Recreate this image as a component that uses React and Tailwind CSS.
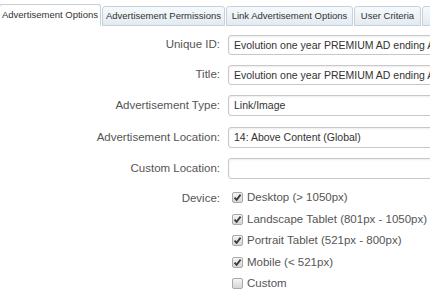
import { useState } from "react";

const tabs = [
  { label: "Advertisement Options", w: "w-[102px]", active: true },
  { label: "Advertisement Permissions", w: "w-[123px]" },
  { label: "Link Advertisement Options", w: "w-[127px]" },
  { label: "User Criteria", w: "w-[67px]" },
  { label: "Other", w: "w-[60px]" },
];

const devices = [
  { label: "Desktop (> 1050px)", checked: true },
  { label: "Landscape Tablet (801px - 1050px)", checked: true },
  { label: "Portrait Tablet (521px - 800px)", checked: true },
  { label: "Mobile (< 521px)", checked: true },
  { label: "Custom", checked: false },
];

function Box({ checked }) {
  return (
    <span className="flex h-[11px] w-[11px] shrink-0 items-center justify-center rounded-[2px] border border-[#a9a9a9] bg-gradient-to-b from-[#f4f4f4] to-[#d6d6d6]">
      {checked && (
        <svg width="9" height="9" viewBox="0 0 9 9">
          <path d="M1.5 4.6 L3.6 6.8 L7.6 1.6" fill="none" stroke="#3a3a3a" strokeWidth="1.8" />
        </svg>
      )}
    </span>
  );
}

function Row({ label, mt, children }) {
  return (
    <div className={`flex items-center ${mt}`}>
      <div className="w-[221px] shrink-0 whitespace-nowrap pr-[1px] text-right text-[11.5px] text-[#555]">{label}</div>
      <div className="ml-[7px] flex-1">{children}</div>
    </div>
  );
}

export default function App() {
  const [checks, setChecks] = useState(devices.map((d) => d.checked));

  const field =
    "block h-[20px] w-[240px] rounded-[3px] border border-[#c8c8c8] bg-white px-[5px] text-[10.5px] leading-[18px] text-[#333] shadow-[inset_0_1px_2px_rgba(0,0,0,0.08)] whitespace-nowrap overflow-hidden";

  return (
    <div className="h-[300px] w-[430px] overflow-hidden bg-white" style={{ fontFamily: '"Liberation Sans", Arial, sans-serif' }}>
      <div className="flex items-end gap-[1px] pt-[4px]">
        {tabs.map((t) => (
          <div
            key={t.label}
            className={`${t.w} shrink-0 overflow-hidden whitespace-nowrap rounded-t-[3px] border border-[#c5d1da] text-center text-[9.5px] text-[#333] ${
              t.active
                ? "-ml-px h-[22px] border-b-white bg-white leading-[20px]"
                : "h-[20px] bg-gradient-to-b from-[#f7fafc] to-[#e3ebf1] leading-[18px]"
            }`}
          >
            {t.label}
          </div>
        ))}
      </div>

      <Row label="Unique ID:" mt="mt-[9px]">
        <div className={field}>Evolution one year PREMIUM AD ending April 2020</div>
      </Row>
      <Row label="Title:" mt="mt-[10px]">
        <div className={field}>Evolution one year PREMIUM AD ending April 2020</div>
      </Row>
      <Row label="Advertisement Type:" mt="mt-[10px]">
        <div className={`${field} h-[21px]`}>Link/Image</div>
      </Row>
      <Row label="Advertisement Location:" mt="mt-[11px]">
        <div className={`${field} h-[21px]`}>14: Above Content (Global)</div>
      </Row>
      <Row label="Custom Location:" mt="mt-[10px]">
        <div className={`${field} h-[21px]`}></div>
      </Row>

      <div className="mt-[10px] flex items-start">
        <div className="w-[221px] shrink-0 pr-[1px] pt-[1px] text-right text-[11.5px] text-[#555]">Device:</div>
        <div className="ml-[11px] flex flex-col gap-[4px]">
          {devices.map((d, i) => (
            <label
              key={d.label}
              className="flex h-[17.5px] cursor-pointer items-center gap-[4px] whitespace-nowrap text-[11.5px] text-[#555]"
              onClick={() => setChecks(checks.map((c, j) => (j === i ? !c : c)))}
            >
              <Box checked={checks[i]} />
              <span>{d.label}</span>
            </label>
          ))}
        </div>
      </div>
    </div>
  );
}
